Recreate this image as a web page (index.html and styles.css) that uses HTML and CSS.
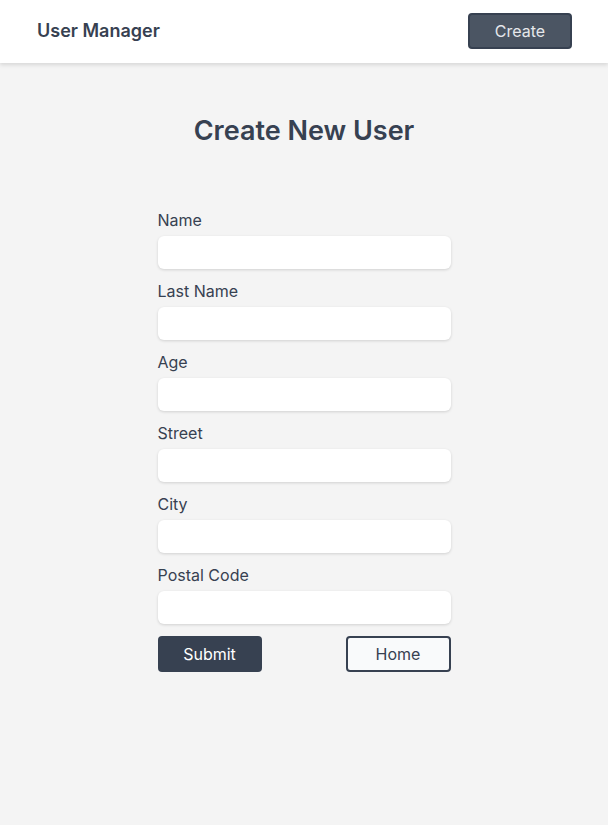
FILE: index.html
```html
<!DOCTYPE html>
<html>
<head>
<meta charset="utf-8">
<link rel="stylesheet" href="styles.css">
</head>
<body>
<header class="topbar">
  <div class="brand">User Manager</div>
  <button class="btn-create">Create</button>
</header>
<main class="page">
  <h1 class="title">Create New User</h1>
  <form class="form">
    <label class="field"><span class="label">Name</span><input class="input" type="text"></label>
    <label class="field"><span class="label">Last Name</span><input class="input" type="text"></label>
    <label class="field"><span class="label">Age</span><input class="input" type="text"></label>
    <label class="field"><span class="label">Street</span><input class="input" type="text"></label>
    <label class="field"><span class="label">City</span><input class="input" type="text"></label>
    <label class="field"><span class="label">Postal Code</span><input class="input" type="text"></label>
    <div class="actions">
      <button type="button" class="btn-submit">Submit</button>
      <button type="button" class="btn-home">Home</button>
    </div>
  </form>
</main>
</body>
</html>
```
FILE: styles.css
```css
* { box-sizing: border-box; }
html, body { margin: 0; padding: 0; }
body {
  font-family: Inter, "Noto Sans", sans-serif;
  background: #f4f4f4;
  color: #374151;
  min-height: 825px;
}
.topbar {
  height: 63px;
  background: #fff;
  display: flex;
  align-items: center;
  justify-content: space-between;
  padding: 0 36px 2px 37px;
  box-shadow: 0 2px 4px rgba(0,0,0,0.12);
  position: relative;
}
.brand {
  font-size: 18px;
  font-weight: 600;
  color: #374151;
}
.btn-create {
  width: 104px;
  height: 36px;
  background: #4b5563;
  border: 2px solid #374151;
  border-radius: 4px;
  color: #e5e7eb;
  font-family: inherit;
  font-size: 16px;
}
.page {
  display: flex;
  flex-direction: column;
  align-items: center;
}
.title {
  margin: 52px 0 0;
  font-size: 27px;
  font-weight: 600;
  line-height: 32px;
  color: #374151;
}
.form {
  width: 293px;
  margin-top: 63px;
  display: flex;
  flex-direction: column;
  gap: 12px;
}
.field {
  display: flex;
  flex-direction: column;
  gap: 6px;
}
.label {
  font-size: 16px;
  line-height: 20px;
  color: #374151;
}
.input {
  height: 33px;
  border: none;
  border-radius: 6px;
  background: #fff;
  box-shadow: 0 1px 3px rgba(0,0,0,0.15);
  font-family: inherit;
  font-size: 15px;
  padding: 0 10px;
}
.actions {
  display: flex;
  justify-content: space-between;
}
.btn-submit, .btn-home {
  width: 104px;
  height: 36px;
  border-radius: 4px;
  font-family: inherit;
  font-size: 16px;
}
.btn-submit {
  background: #374151;
  border: none;
  color: #fff;
}
.btn-home {
  width: 105px;
  background: #f9fafb;
  border: 2px solid #374151;
  color: #374151;
}
```
